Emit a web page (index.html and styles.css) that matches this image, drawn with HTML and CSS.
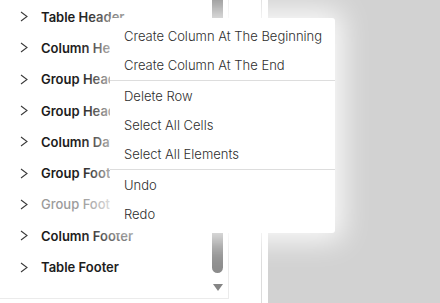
FILE: index.html
```html
<!DOCTYPE html>
<html lang="en">
<head>
  <meta charset="UTF-8">
  <title>Report Bands</title>
  <link rel="stylesheet" href="styles.css">
</head>
<body>
  <div class="layout">
    <div class="tree-panel">
      <ul class="band-list">
        <li class="band"><span class="chevron"><svg width="8" height="11" viewBox="0 0 8 11"><polyline points="1,1 7,5.5 1,10" /></svg></span>Table Header</li>
        <li class="band"><span class="chevron"><svg width="8" height="11" viewBox="0 0 8 11"><polyline points="1,1 7,5.5 1,10" /></svg></span>Column Header</li>
        <li class="band"><span class="chevron"><svg width="8" height="11" viewBox="0 0 8 11"><polyline points="1,1 7,5.5 1,10" /></svg></span>Group Header</li>
        <li class="band"><span class="chevron"><svg width="8" height="11" viewBox="0 0 8 11"><polyline points="1,1 7,5.5 1,10" /></svg></span>Group Header</li>
        <li class="band"><span class="chevron"><svg width="8" height="11" viewBox="0 0 8 11"><polyline points="1,1 7,5.5 1,10" /></svg></span>Column Data</li>
        <li class="band"><span class="chevron"><svg width="8" height="11" viewBox="0 0 8 11"><polyline points="1,1 7,5.5 1,10" /></svg></span>Group Footer</li>
        <li class="band disabled"><span class="chevron"><svg width="8" height="11" viewBox="0 0 8 11"><polyline points="1,1 7,5.5 1,10" /></svg></span>Group Footer</li>
        <li class="band"><span class="chevron"><svg width="8" height="11" viewBox="0 0 8 11"><polyline points="1,1 7,5.5 1,10" /></svg></span>Column Footer</li>
        <li class="band"><span class="chevron"><svg width="8" height="11" viewBox="0 0 8 11"><polyline points="1,1 7,5.5 1,10" /></svg></span>Table Footer</li>
      </ul>
      <div class="scrollbar">
        <div class="scroll-thumb"></div>
        <div class="scroll-arrow"></div>
      </div>
    </div>
    <div class="side-strip"></div>
    <div class="strip-gap"></div>
    <div class="canvas"></div>
  </div>

  <div class="context-menu">
    <div class="menu-item">Create Column At The Beginning</div>
    <div class="menu-item">Create Column At The End</div>
    <div class="menu-divider"></div>
    <div class="menu-item">Delete Row</div>
    <div class="menu-item">Select All Cells</div>
    <div class="menu-item">Select All Elements</div>
    <div class="menu-divider"></div>
    <div class="menu-item">Undo</div>
    <div class="menu-item">Redo</div>
  </div>
</body>
</html>
```

FILE: styles.css
```css
body {
  margin: 0;
  background-color: #ffffff;
  font-family: Inter, "Liberation Sans", Arial, sans-serif;
  overflow: hidden;
}

.layout {
  display: flex;
  height: 303px;
}

.tree-panel {
  position: relative;
  width: 228px;
  height: 298px;
  border-right: 1px solid #ebebeb;
  border-bottom: 1px solid #ebebeb;
  background-color: #ffffff;
  display: flex;
}

.band-list {
  list-style: none;
  margin: 0;
  padding: 1px 0 0 0;
  flex: 1;
}

.band {
  display: flex;
  align-items: center;
  height: 31.3px;
  padding-left: 20px;
  font-size: 13px;
  font-weight: 600;
  color: #1c1c1c;
  white-space: nowrap;
}

.band.disabled {
  color: #9b9b9b;
  font-weight: 500;
}

.chevron {
  display: flex;
  width: 21px;
}

.chevron polyline {
  fill: none;
  stroke: #3a3a3a;
  stroke-width: 1.1;
}

.scrollbar {
  width: 11px;
  margin-right: 5px;
  display: flex;
  flex-direction: column;
  align-items: center;
}

.scroll-thumb {
  width: 11px;
  height: 273px;
  background-color: #8c8c8c;
  border-radius: 0 0 6px 6px;
}

.scroll-arrow {
  margin-top: 11px;
  width: 0;
  height: 0;
  border-left: 5.5px solid transparent;
  border-right: 5.5px solid transparent;
  border-top: 7px solid #858585;
}

.side-strip {
  width: 32px;
  height: 303px;
  border-right: 1px solid #dcdcdc;
}

.strip-gap {
  width: 6px;
}

.canvas {
  flex: 1;
  background-color: #d2d2d2;
}

.context-menu {
  position: absolute;
  left: 110px;
  top: 18px;
  width: 225px;
  padding: 4px 0;
  box-sizing: border-box;
  background-color: #ffffff;
  border-radius: 3px;
  box-shadow: 0 0 28px 8px rgba(255, 255, 255, 0.9);
}

.menu-item {
  height: 29px;
  line-height: 29px;
  padding-left: 14px;
  font-size: 13px;
  font-weight: 300;
  color: #2e2e2e;
  white-space: nowrap;
}

.menu-divider {
  height: 1px;
  margin: 0 0 1px 0;
  background-color: #dddddd;
}
```
